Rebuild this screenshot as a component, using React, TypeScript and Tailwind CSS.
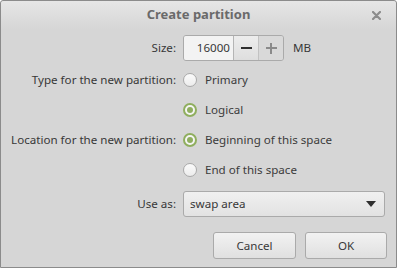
import React, { useState } from 'react';

const Radio: React.FC<{ checked: boolean; label: string; onClick: () => void }> = ({ checked, label, onClick }) => (
    <button type="button" onClick={onClick} className="flex items-center gap-[8px] h-[30px] text-[#3c3c3c]">
        {checked ? (
            <span className="w-[14px] h-[14px] rounded-full border-2 border-[#8fae5e] bg-[#f5f5f5] flex items-center justify-center">
                <span className="w-[6px] h-[6px] rounded-full bg-[#8fae5e]"></span>
            </span>
        ) : (
            <span className="w-[14px] h-[14px] rounded-full border border-[#a9a9a9] bg-gradient-to-b from-[#fbfbfb] to-[#ececec]"></span>
        )}
        <span>{label}</span>
    </button>
);

const App: React.FC = () => {
    const [size, setSize] = useState(16000);
    const [type, setType] = useState<'primary' | 'logical'>('logical');
    const [location, setLocation] = useState<'begin' | 'end'>('begin');

    return (
        <div
            className="w-[397px] h-[268px] bg-[#d6d6d6] border border-[#8b8b8b] rounded-t-[3px] flex flex-col text-[11.6px] text-[#383838]"
            style={{ fontFamily: '"Noto Sans", "Open Sans", sans-serif' }}
        >
            <div className="relative h-[28px] shrink-0 flex items-center justify-center bg-gradient-to-b from-[#e6e6e6] to-[#d6d6d6] rounded-t-[3px]">
                <span className="font-bold text-[13px] text-[#6a6a6a]">Create partition</span>
                <svg className="absolute right-[15px] top-[10px]" width="9" height="9" viewBox="0 0 9 9">
                    <path d="M1 1 L8 8 M8 1 L1 8" stroke="#8c8c8c" strokeWidth="2.2" strokeLinecap="round" />
                </svg>
            </div>

            <div className="grid grid-cols-[175px_1fr] gap-x-[7px] pt-[6px] whitespace-nowrap">
                <div className="h-[26px] flex items-center justify-end">Size:</div>
                <div className="h-[26px] flex items-center gap-[9px]">
                    <div className="flex h-[26px] border border-[#aaaaaa] rounded-[3px] overflow-hidden">
                        <div className="w-[49px] bg-[#f3f3f3] flex items-center justify-end pr-[3px]">{size}</div>
                        <button
                            type="button"
                            onClick={() => setSize(s => Math.max(0, s - 1))}
                            className="w-[25px] border-l border-[#b5b5b5] bg-gradient-to-b from-[#ededed] to-[#dedede] flex items-center justify-center"
                        >
                            <span className="block w-[11px] h-[2px] bg-[#2f2f2f]"></span>
                        </button>
                        <button
                            type="button"
                            onClick={() => setSize(s => s + 1)}
                            className="w-[25px] border-l border-[#c2c2c2] bg-[#d9d9d9] flex items-center justify-center relative"
                        >
                            <span className="block w-[11px] h-[2px] bg-[#8a8a8a]"></span>
                            <span className="absolute block w-[2px] h-[11px] bg-[#8a8a8a]"></span>
                        </button>
                    </div>
                    <span>MB</span>
                </div>

                <div className="h-[30px] mt-[4px] flex items-center justify-end">Type for the new partition:</div>
                <div className="mt-[4px]">
                    <Radio checked={type === 'primary'} label="Primary" onClick={() => setType('primary')} />
                </div>
                <div></div>
                <div>
                    <Radio checked={type === 'logical'} label="Logical" onClick={() => setType('logical')} />
                </div>

                <div className="h-[30px] flex items-center justify-end">Location for the new partition:</div>
                <div>
                    <Radio checked={location === 'begin'} label="Beginning of this space" onClick={() => setLocation('begin')} />
                </div>
                <div></div>
                <div>
                    <Radio checked={location === 'end'} label="End of this space" onClick={() => setLocation('end')} />
                </div>

                <div className="h-[26px] mt-[6px] flex items-center justify-end">Use as:</div>
                <div className="mt-[6px] pr-[11px]">
                    <div className="h-[26px] flex items-center justify-between border border-[#aaaaaa] rounded-[3px] bg-gradient-to-b from-[#f0f0f0] to-[#e2e2e2] pl-[6px] pr-[8px]">
                        <span>swap area</span>
                        <svg width="10" height="6" viewBox="0 0 10 6">
                            <path d="M0 0 L10 0 L5 6 Z" fill="#2f2f2f" />
                        </svg>
                    </div>
                </div>
            </div>

            <div className="flex justify-end gap-[9px] pr-[9px] mt-[15px]">
                <button type="button" className="w-[83px] h-[27px] border border-[#aaaaaa] rounded-[3px] bg-gradient-to-b from-[#f2f2f2] to-[#e0e0e0]">
                    Cancel
                </button>
                <button type="button" className="w-[82px] h-[27px] border border-[#aaaaaa] rounded-[3px] bg-gradient-to-b from-[#f2f2f2] to-[#e0e0e0]">
                    OK
                </button>
            </div>
        </div>
    );
};

export default App;
